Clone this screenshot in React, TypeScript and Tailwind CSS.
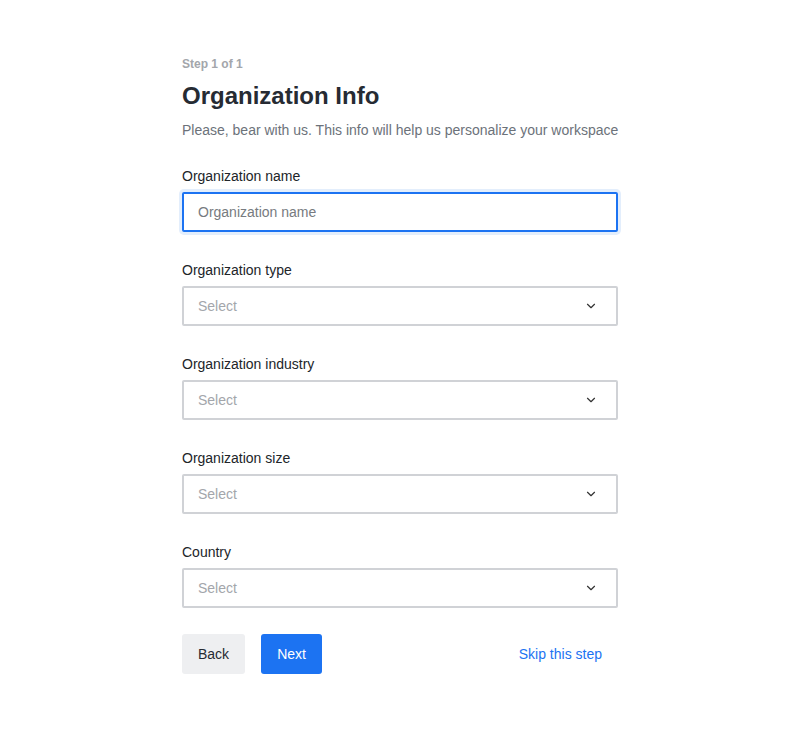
import { ChevronDown } from "lucide-react";

const fields = [
  "Organization type",
  "Organization industry",
  "Organization size",
  "Country",
];

const SelectField = ({ label }: { label: string }) => {
  return (
    <div className="mt-[30px]">
      <label className="block text-[14px] leading-4 text-[#212529] mb-2">
        {label}
      </label>
      <div className="flex items-center justify-between h-10 border-2 border-[#d0d2d6] rounded-[2px] pl-[14px] pr-[18px]">
        <span className="text-[14px] text-[#a3a6ab]">Select</span>
        <ChevronDown size={14} strokeWidth={2} className="text-[#333]" />
      </div>
    </div>
  );
};

const App = () => {
  return (
    <div
      className="min-h-[730px] bg-white"
      style={{ fontFamily: "'Liberation Sans', Arial, sans-serif" }}
    >
      <div className="w-[436px] ml-[182px] pt-[57px]">
        <p className="text-[12px] leading-[14px] font-bold text-[#a3a6ab]">
          Step 1 of 1
        </p>
        <h1 className="mt-[11px] text-[24px] leading-[28px] font-bold text-[#262b33]">
          Organization Info
        </h1>
        <p className="mt-[12px] text-[14px] leading-4 text-[#6c727a] whitespace-nowrap">
          Please, bear with us. This info will help us personalize your workspace
        </p>

        <div className="mt-[30px]">
          <label className="block text-[14px] leading-4 text-[#212529] mb-2">
            Organization name
          </label>
          <input
            placeholder="Organization name"
            className="w-full h-10 border-2 border-[#1c73f2] rounded-[2px] px-[14px] text-[14px] text-[#212529] placeholder:text-[#777b80] outline-none shadow-[0_0_0_3px_#e3eefc]"
          />
        </div>

        {fields.map((f) => (
          <SelectField key={f} label={f} />
        ))}

        <div className="flex items-center mt-[26px]">
          <button className="h-10 px-4 bg-[#eeeff1] rounded-[3px] text-[14px] text-[#262b33]">
            Back
          </button>
          <button className="ml-4 h-10 px-4 bg-[#1c73f2] rounded-[3px] text-[14px] text-white">
            Next
          </button>
          <button className="ml-auto h-10 px-4 text-[14px] text-[#1c73f2]">
            Skip this step
          </button>
        </div>
      </div>
    </div>
  );
};

export default App;
